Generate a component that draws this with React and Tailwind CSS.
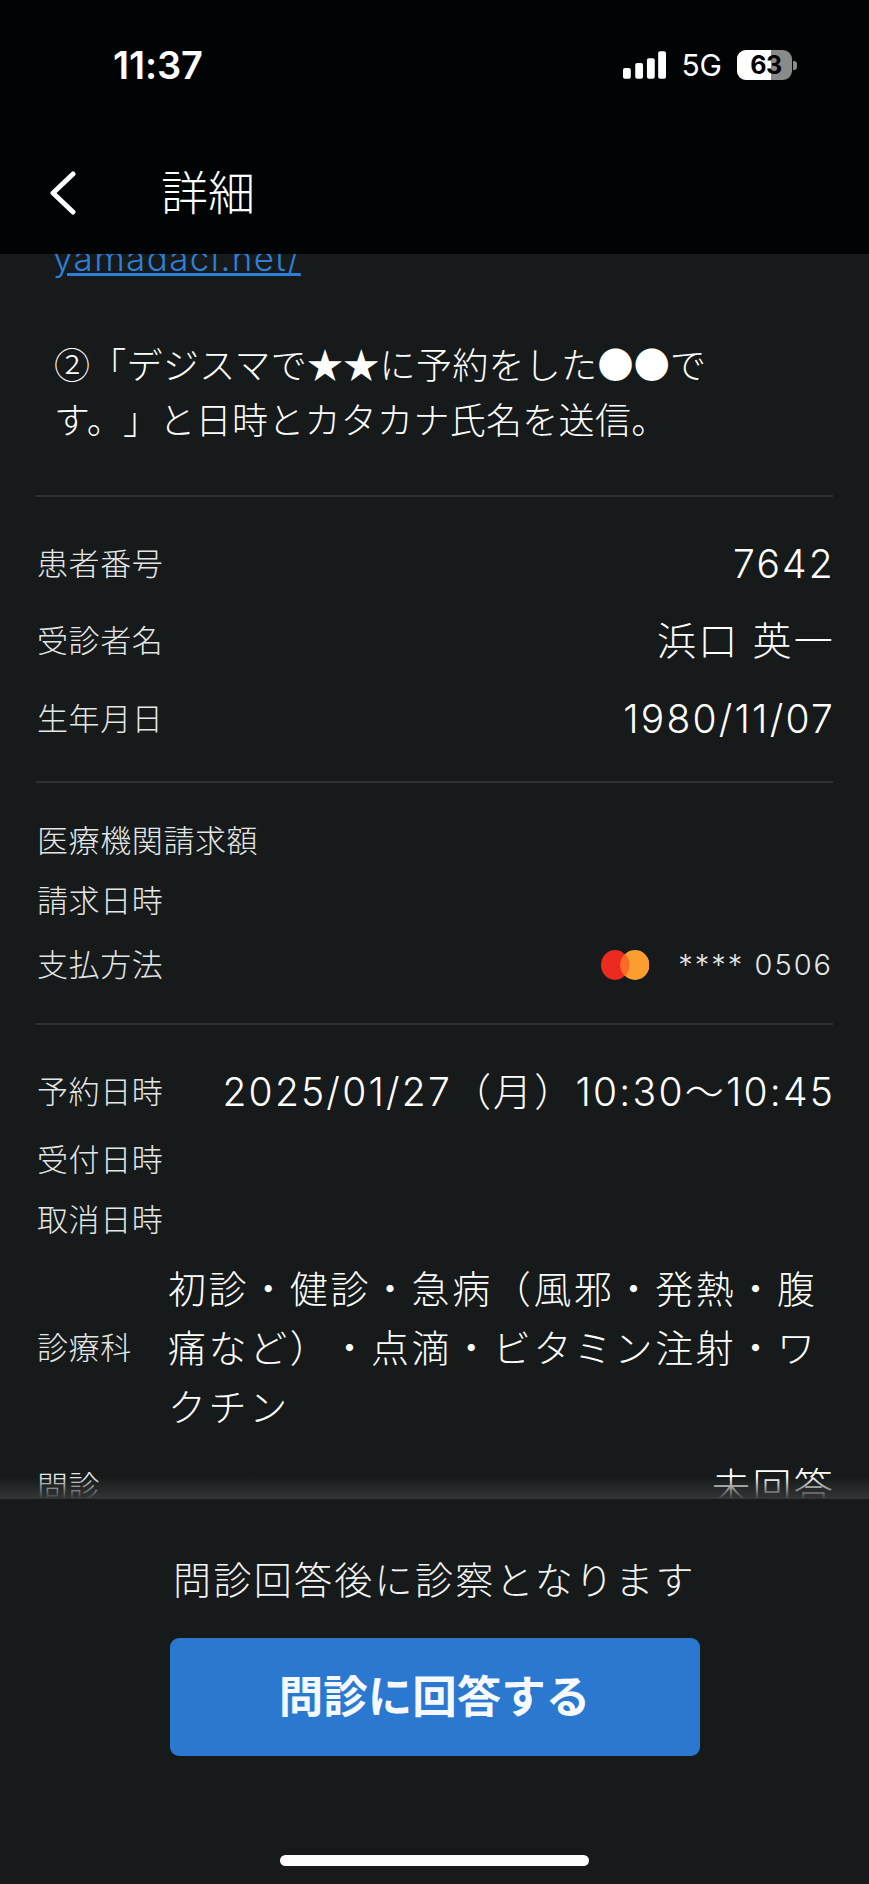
const FONT = "font-['Inter','Noto_Sans_CJK_JP',sans-serif]";

function Row({ label, value, className = "", valueClass = "" }) {
  return (
    <div className={`flex items-center justify-between ${className}`}>
      <span className="text-[31px] leading-[36px] tracking-[0.6px] text-[#e4e6e6] font-light pl-px">{label}</span>
      {value ? <span className={`text-[39px] leading-[44px] tracking-[2.2px] text-white font-light -mr-[2px] ${valueClass}`}>{value}</span> : null}
    </div>
  );
}

function Divider() {
  return <div className="h-[2px] bg-[#2e3131]" />;
}

function StatusBar() {
  return (
    <div className="h-[130px] relative flex items-start justify-between pl-[113px] pr-[72px] pt-[43px]">
      <span className="text-[38px] leading-[44px] font-semibold tracking-[-0.1px] text-white">11:37</span>
      <div className="flex items-center h-[44px]">
        <svg width="43" height="28" viewBox="0 0 44 28" className="mr-[15px]" fill="#fff">
          <rect x="0" y="17" width="8" height="11" rx="2" />
          <rect x="12.5" y="12" width="8" height="16" rx="2" />
          <rect x="24.5" y="7" width="8" height="21" rx="2" />
          <rect x="36" y="0" width="8" height="28" rx="2" />
        </svg>
        <span className="text-[30px] leading-[44px] font-normal text-white mr-[15px]">5G</span>
        <div className="relative w-[55px] h-[30px] rounded-[9px] bg-[#8a8a8a] overflow-hidden flex items-center justify-center">
          <div className="absolute inset-y-0 left-0 w-[34px] bg-white" />
          <span className="relative text-[25px] leading-[30px] font-bold text-black tracking-[-0.5px] pl-[3px]">63</span>
        </div>
        <div className="w-[4px] h-[9px] ml-[1px] rounded-r-[3px] bg-[#8a8a8a]" />
      </div>
    </div>
  );
}

export default function App() {
  return (
    <div className={`w-[869px] h-[1884px] flex flex-col overflow-hidden relative bg-[#161a1a] text-white [text-spacing-trim:space-all] ${FONT}`}>
      <header className="h-[254px] shrink-0 bg-[#000404] z-10">
        <StatusBar />
        <div className="flex items-center h-[86px] mt-[20px] pl-[49px]">
          <svg width="27" height="44" viewBox="0 0 27 44" fill="none" stroke="#fff" strokeWidth="5" strokeLinecap="round" strokeLinejoin="round">
            <path d="M24 3 L4 22 L24 41" />
          </svg>
          <span className="ml-[85px] text-[47px] leading-[60px] font-light">詳細</span>
        </div>
      </header>

      <main className="flex-1 min-h-0 overflow-hidden px-[36px] relative">
        <div className="-mt-[23px]">
          <div className="pl-[17px] text-[35px] leading-[55px] tracking-[1.4px] text-[#2f7fd6] underline font-light">yamadaci.net/</div>
          <div className="pl-[18px] pt-[50px] pb-[49px] text-[36px] leading-[55px] tracking-[0.3px] text-white font-light font-['Noto_Sans_CJK_JP',sans-serif]">
            ②「デジスマで★★に予約をした●●で<br />す。」と日時とカタカナ氏名を送信。
          </div>
        </div>
        <Divider />
        <div className="pt-[28px] pb-[23px]">
          <Row className="h-[77px]" label="患者番号" value="7642" />
          <Row className="h-[78px]" label="受診者名" value="浜口 英一" />
          <Row className="h-[78px]" label="生年月日" value="1980/11/07" />
        </div>
        <Divider />
        <div className="pt-[28px] pb-[24px]">
          <Row className="h-[60px]" label="医療機関請求額" />
          <Row className="h-[60px]" label="請求日時" />
          <div className="flex items-center justify-between h-[68px]">
            <span className="text-[31px] leading-[36px] tracking-[0.6px] text-[#e4e6e6] font-light pl-px">支払方法</span>
            <div className="flex items-center">
              <svg width="48" height="30" viewBox="0 0 48 30" className="mr-[29px]">
                <ellipse cx="14" cy="15" rx="14" ry="15" fill="#eb2a20" />
                <ellipse cx="34" cy="15" rx="14.5" ry="15" fill="#fb9e2f" />
                <path d="M24 4 A14 15 0 0 1 24 26 A14.5 15 0 0 1 24 4 Z" fill="#fb6a26" />
              </svg>
              <span className="text-[29px] leading-[36px] tracking-[2px] text-[#e4e6e6] font-light">**** 0506</span>
            </div>
          </div>
        </div>
        <Divider />
        <div className="pt-[33px]">
          <Row className="h-[68px]" label="予約日時" value="2025/01/27（月）10:30〜10:45" />
          <Row className="h-[68px]" label="受付日時" />
          <Row className="h-[52px]" label="取消日時" />
          <div className="flex items-center h-[204px]">
            <span className="w-[132px] shrink-0 text-[31px] leading-[36px] tracking-[0.6px] text-[#e4e6e6] font-light pl-px">診療科</span>
            <p className="text-[38px] leading-[59px] tracking-[2.6px] text-white font-light">
              初診・健診・急病（風邪・発熱・腹痛など）・点滴・ビタミン注射・ワクチン
            </p>
          </div>
          <Row className="h-[74px]" label="問診" value="未回答" />
        </div>
        <div className="absolute left-0 right-0 bottom-0 h-[22px] bg-gradient-to-b from-[#33363600] to-[#333636]" />
      </main>

      <footer className="h-[385px] shrink-0 bg-[#161a1a] flex flex-col items-center z-10">
        <p className="mt-[56px] text-[38px] leading-[50px] tracking-[2.3px] text-[#f2f3f3] font-light">問診回答後に診察となります</p>
        <button className="mt-[33px] w-[530px] h-[118px] rounded-[9px] bg-[#2a78cf] text-[44.5px] font-bold text-[#f5f8fc] flex items-center justify-center">
          問診に回答する
        </button>
        <div className="mt-[99px] w-[309px] h-[11px] rounded-full bg-white" />
      </footer>
    </div>
  );
}
